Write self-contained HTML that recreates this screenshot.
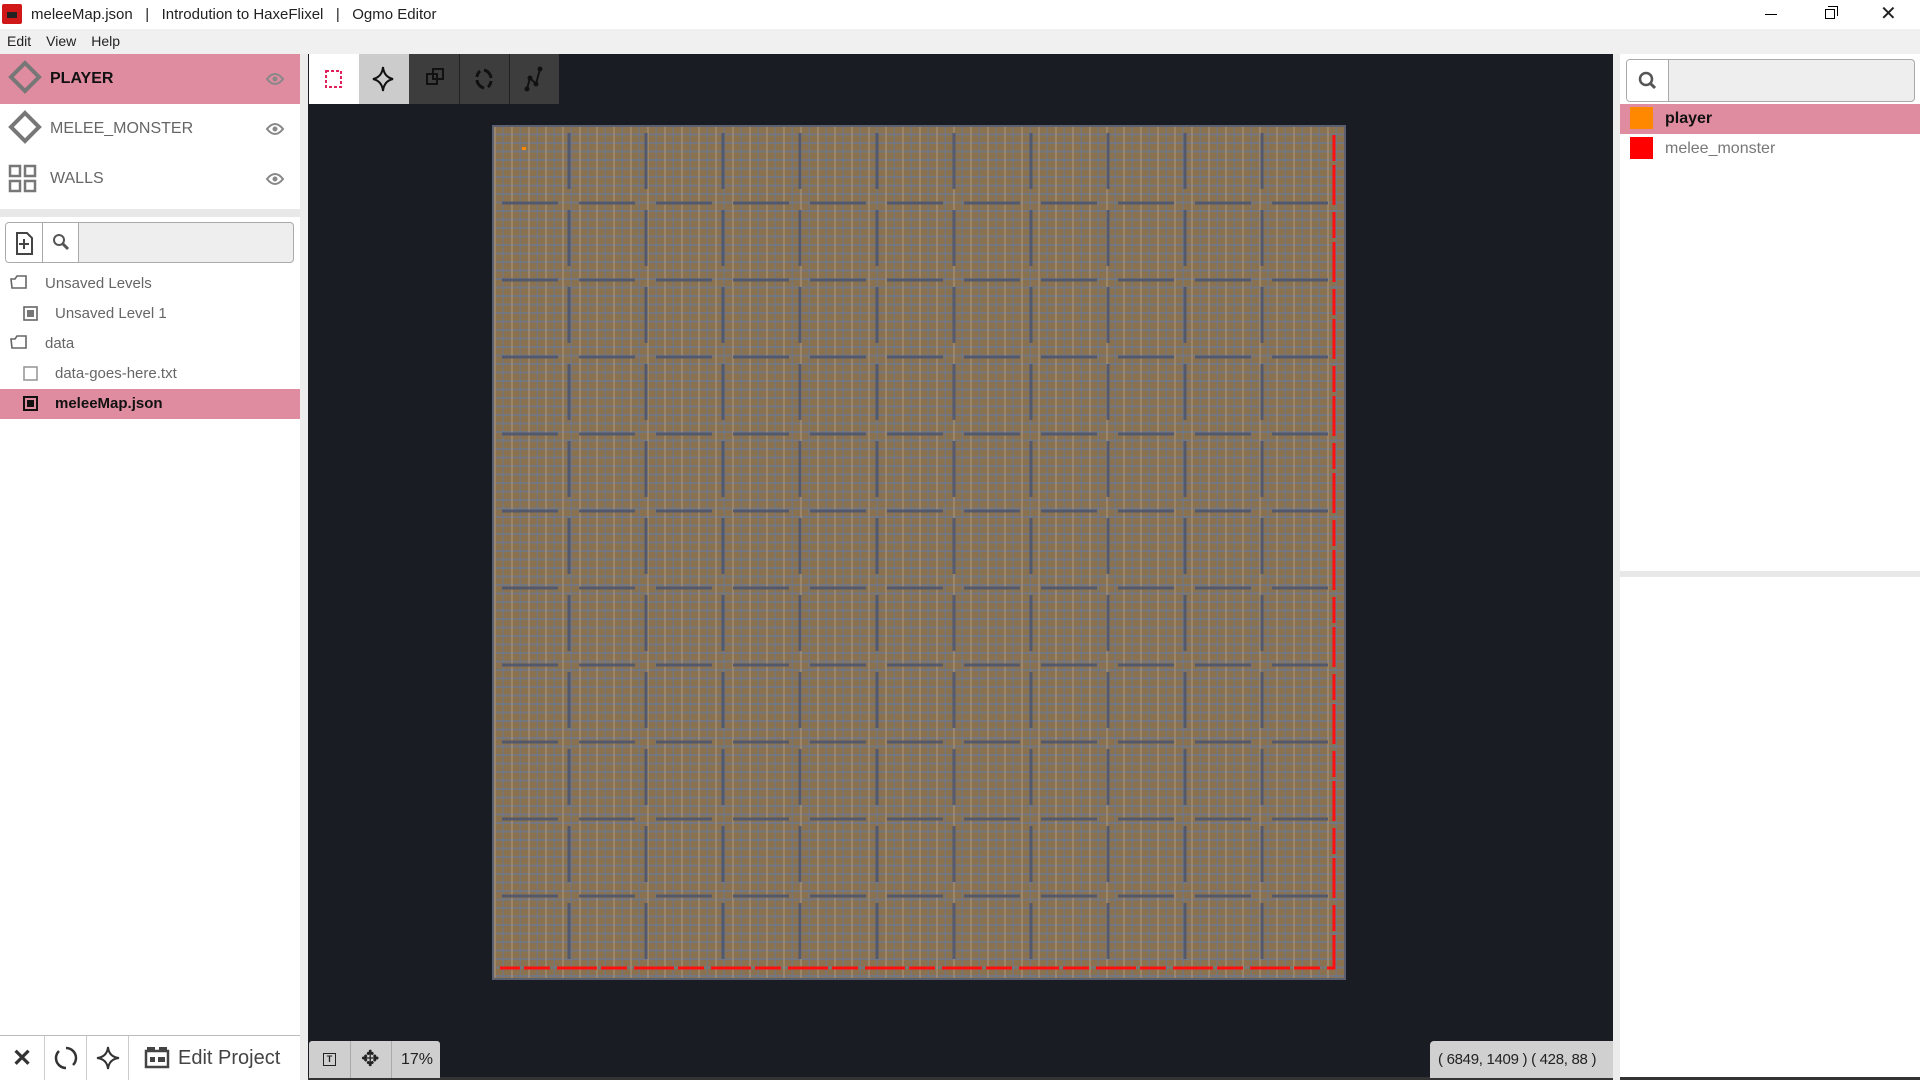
<!DOCTYPE html>
<html><head><meta charset="utf-8"><style>
*{box-sizing:border-box;margin:0;padding:0}
body{width:1920px;height:1080px;overflow:hidden;font-family:"Liberation Sans",sans-serif;background:#fff;position:relative;color:#222}
.a{position:absolute}
.title{left:0;top:0;width:1920px;height:29px;background:#fff;font-size:15px;line-height:29px}
.menu{left:0;top:29px;width:1920px;height:25px;background:#f0f0f0;font-size:14px;line-height:25px}
.row{position:absolute;left:0;width:300px;height:50px;font-size:16px;line-height:50px}
.tree{position:absolute;left:0;width:300px;height:30px;font-size:15px;line-height:30px;color:#666}
.cbtn{position:absolute;top:1036px;height:44px;border-left:1px solid #ccc;display:flex;align-items:center;justify-content:center}
</style></head><body>
<div class="a title">
 <div class="a" style="left:2px;top:4px;width:20px;height:20px;background:#d01818;border-radius:2px"><div class="a" style="left:5px;top:8px;width:10px;height:6px;background:#222"></div></div>
 <span class="a" style="left:31px">meleeMap.json &nbsp;&nbsp;| &nbsp;&nbsp;Introdution to HaxeFlixel &nbsp;&nbsp;| &nbsp;&nbsp;Ogmo Editor</span>
 <div class="a" style="left:1765px;top:14px;width:12px;height:1px;background:#000"></div>
 <div class="a" style="left:1825px;top:9px;width:10px;height:10px;border:1px solid #000"></div>
 <div class="a" style="left:1828px;top:6px;width:10px;height:10px;border-top:1px solid #000;border-right:1px solid #000"></div>
 <span class="a" style="left:1880px;top:0;font-size:20px">✕</span>
</div>
<div class="a menu"><span style="margin-left:7px">Edit</span><span style="margin-left:15px">View</span><span style="margin-left:15px">Help</span></div>

<div class="row" style="top:54px;background:#e08ca0;font-weight:bold;color:#111"><span class="a" style="left:50px">PLAYER</span></div>
<div class="row" style="top:104px;color:#666"><span class="a" style="left:50px">MELEE_MONSTER</span></div>
<div class="row" style="top:154px;color:#666"><span class="a" style="left:50px">WALLS</span></div>
<svg class="a" style="left:0;top:54px" width="300" height="150">
 <g fill="none" stroke="#777" stroke-width="4"><path d="M25 9 L39 23 L25 37 L11 23Z"/><path d="M25 59 L39 73 L25 87 L11 73Z"/></g>
 <g fill="none" stroke="#777" stroke-width="2.5"><rect x="10" y="112" width="10" height="10"/><rect x="25" y="112" width="10" height="10"/><rect x="10" y="127" width="10" height="10"/><rect x="25" y="127" width="10" height="10"/></g>
 <g fill="none" stroke="#888" stroke-width="2"><path d="M267 25Q275 15 283 25Q275 35 267 25Z"/><path d="M267 75Q275 65 283 75Q275 85 267 75Z"/><path d="M267 125Q275 115 283 125Q275 135 267 125Z"/></g>
 <g fill="#888"><circle cx="275" cy="25" r="2.5"/><circle cx="275" cy="75" r="2.5"/><circle cx="275" cy="125" r="2.5"/></g>
</svg>
<div class="a" style="left:0;top:209px;width:300px;height:8px;background:#e8e8e8"></div>
<div class="a" style="left:5px;top:222px;width:289px;height:41px;border:1px solid #aaa;border-radius:4px;background:#eee;overflow:hidden">
 <div class="a" style="left:0;top:0;width:37px;height:40px;background:#fff;border-right:1px solid #aaa"></div>
 <div class="a" style="left:37px;top:0;width:36px;height:40px;background:#fff;border-right:1px solid #aaa"></div>
 <svg class="a" style="left:0;top:0" width="80" height="40"><path d="M11 10h10l5 5v16H11z" fill="none" stroke="#444" stroke-width="2"/><path d="M18 16v10M13 21h10" stroke="#444" stroke-width="2"/><circle cx="53" cy="17" r="5" fill="none" stroke="#555" stroke-width="2"/><path d="M57 21l5 5" stroke="#555" stroke-width="3"/></svg>
</div>
<div class="tree" style="top:269px"><span class="a" style="left:45px">Unsaved Levels</span></div>
<div class="tree" style="top:299px"><span class="a" style="left:55px">Unsaved Level 1</span></div>
<div class="tree" style="top:329px"><span class="a" style="left:45px">data</span></div>
<div class="tree" style="top:359px"><span class="a" style="left:55px">data-goes-here.txt</span></div>
<div class="tree" style="top:389px;background:#e08ca0;color:#111;font-weight:bold"><span class="a" style="left:55px">meleeMap.json</span></div>
<svg class="a" style="left:0;top:269px" width="50" height="150">
 <g fill="none" stroke="#666" stroke-width="1.6"><path d="M11 10h4l2-3h9v12H12z"/><path d="M11 70h4l2-3h9v12H12z"/><rect x="24" y="38" width="13" height="13"/><rect x="24" y="98" width="13" height="13" stroke="#999"/></g>
 <rect x="27" y="41" width="7" height="7" fill="#777"/>
 <rect x="24" y="128" width="13" height="13" fill="none" stroke="#111" stroke-width="2"/><rect x="27" y="131" width="7" height="7" fill="#111"/>
</svg>
<div class="a" style="left:0;top:1035px;width:300px;height:1px;background:#bbb"></div>
<div class="cbtn" style="left:0;width:44px;border:none;font-size:24px;font-weight:bold;color:#333">✕</div>
<div class="cbtn" style="left:44px;width:42px"><svg width="26" height="26"><path d="M13 3a10 10 0 0 1 10 10M13 23A10 10 0 0 1 3 13" fill="none" stroke="#333" stroke-width="2.5"/><path d="M6 6a10 10 0 0 0-3 7M20 20a10 10 0 0 0 3-7" fill="none" stroke="#333" stroke-width="2.5"/></svg></div>
<div class="cbtn" style="left:86px;width:42px"><svg width="26" height="26"><path d="M13 2Q14 12 24 13Q14 14 13 24Q12 14 2 13Q12 12 13 2Z" fill="none" stroke="#333" stroke-width="2"/></svg></div>
<div class="cbtn" style="left:128px;width:172px;font-size:20px;color:#444;justify-content:flex-start;padding-left:15px"><svg width="26" height="24" style="margin-right:8px"><rect x="2" y="5" width="22" height="16" fill="none" stroke="#444" stroke-width="2.5"/><rect x="3" y="1" width="8" height="5" fill="#444"/><rect x="15" y="1" width="8" height="5" fill="#444"/><rect x="6" y="11" width="5" height="5" fill="#444"/><rect x="14" y="11" width="7" height="5" fill="#444"/></svg>Edit Project</div>
<div class="a" style="left:300px;top:54px;width:8px;height:1026px;background:#ececec"></div>

<div class="a" style="left:308px;top:54px;width:1305px;height:1023px;background:#191c23"></div>
<div class="a" style="left:308px;top:1077px;width:1612px;height:3px;background:#333"></div>
<div class="a" style="left:309px;top:54px;width:50px;height:50px;background:#fff"></div>
<div class="a" style="left:359px;top:54px;width:50px;height:50px;background:#ccc"></div>
<div class="a" style="left:409px;top:54px;width:150px;height:50px;background:#3d3d3d"></div>
<div class="a" style="left:459px;top:54px;width:1px;height:50px;background:#222"></div>
<div class="a" style="left:509px;top:54px;width:1px;height:50px;background:#222"></div>
<svg class="a" style="left:309px;top:54px" width="250" height="50">
 <rect x="17" y="17" width="15" height="16" fill="none" stroke="#e0205a" stroke-width="2" stroke-dasharray="3 2"/>
 <path d="M74 13Q75 23 84 25Q75 27 74 37Q73 27 64 25Q73 23 74 13Z" fill="none" stroke="#111" stroke-width="2"/>
 <g fill="none" stroke="#111" stroke-width="2"><rect x="118" y="20" width="10" height="10"/><rect x="124" y="15" width="10" height="10"/></g>
 <path d="M175 16a9 9 0 0 1 7 8M175 34a9 9 0 0 1-7-8M171 17a9 9 0 0 0-3 6M179 33a9 9 0 0 0 3-6" fill="none" stroke="#111" stroke-width="3"/>
 <path d="M218 35L221 24L227 30L231 15" fill="none" stroke="#111" stroke-width="2"/><g fill="#111"><circle cx="218" cy="35" r="2.5"/><circle cx="221" cy="24" r="2.5"/><circle cx="227" cy="30" r="2.5"/><circle cx="231" cy="15" r="2.5"/></g>
</svg>

<div class="a" style="left:492px;top:125px;width:854px;height:855px;background-color:#8a7250;border:2px solid #5a6070;
background-image:
linear-gradient(90deg,rgba(215,165,95,.35) 0 2px,transparent 2px),
linear-gradient(90deg,rgba(110,120,140,.7) 0 1.5px,transparent 1.5px),
linear-gradient(0deg,rgba(110,120,140,.8) 0 2px,transparent 2px);
background-size:17px 17px,8.5px 8.5px,8.5px 8.5px"></div>
<svg class="a" style="left:492px;top:125px" width="854" height="855">
 <g stroke="#4a5470" stroke-width="3" stroke-dasharray="56 21" stroke-dashoffset="-8" opacity=".85">
  <path d="M77 0V855M154 0V855M231 0V855M308 0V855M385 0V855M462 0V855M539 0V855M616 0V855M693 0V855M770 0V855"/>
 </g>
 <g stroke="#4a5470" stroke-width="3" stroke-dasharray="56 21" stroke-dashoffset="-10" opacity=".85">
  <path d="M0 78H854M0 155H854M0 232H854M0 309H854M0 386H854M0 463H854M0 540H854M0 617H854M0 694H854M0 771H854"/>
 </g>
 <path d="M842 10V843H8" fill="none" stroke="#ff1010" stroke-width="3" stroke-dasharray="26 4 40 7"/>
 <rect x="30" y="22" width="4" height="3" fill="#ff8800"/>
</svg>

<div class="a" style="left:309px;top:1041px;width:131px;height:37px;background:#cfcfcf;border-radius:3px 3px 0 0;font-size:16px;line-height:37px">
 <div class="a" style="left:41px;top:0;width:1px;height:37px;background:#aaa"></div><div class="a" style="left:82px;top:0;width:1px;height:37px;background:#aaa"></div>
 <div class="a" style="left:14px;top:12px;width:13px;height:13px;border:1.5px solid #222;font-size:9px;line-height:10px;text-align:center;font-weight:bold">T</div>
 <span class="a" style="left:52px;top:-1px;font-size:22px">✥</span>
 <span class="a" style="left:92px">17%</span>
</div>
<div class="a" style="left:1430px;top:1041px;width:183px;height:37px;background:#d0d0d0;border-radius:4px 0 0 0;font-size:15px;line-height:37px;padding-left:8px;color:#222;white-space:nowrap;overflow:hidden;letter-spacing:-0.3px">( 6849, 1409 ) ( 428, 88 )</div>

<div class="a" style="left:1613px;top:54px;width:7px;height:1026px;background:#ececec"></div>
<div class="a" style="left:1626px;top:59px;width:289px;height:43px;border:1px solid #aaa;border-radius:4px;background:#eee;overflow:hidden">
 <div class="a" style="left:0;top:0;width:42px;height:42px;background:#fff;border-right:1px solid #aaa"></div>
 <svg class="a" width="42" height="42"><circle cx="19" cy="19" r="6" fill="none" stroke="#555" stroke-width="2.5"/><path d="M23 23l5 5" stroke="#555" stroke-width="3"/></svg>
</div>
<div class="a" style="left:1620px;top:104px;width:300px;height:30px;background:#e08ca0;font-size:16px;line-height:30px;font-weight:bold;color:#111"><div class="a" style="left:10px;top:3px;width:23px;height:22px;background:#ff8800"></div><span class="a" style="left:45px">player</span></div>
<div class="a" style="left:1620px;top:134px;width:300px;height:30px;font-size:16px;line-height:30px;color:#777"><div class="a" style="left:10px;top:3px;width:23px;height:22px;background:#ff0000"></div><span class="a" style="left:45px">melee_monster</span></div>
<div class="a" style="left:1620px;top:571px;width:300px;height:6px;background:#e8e8e8"></div>
</body></html>
